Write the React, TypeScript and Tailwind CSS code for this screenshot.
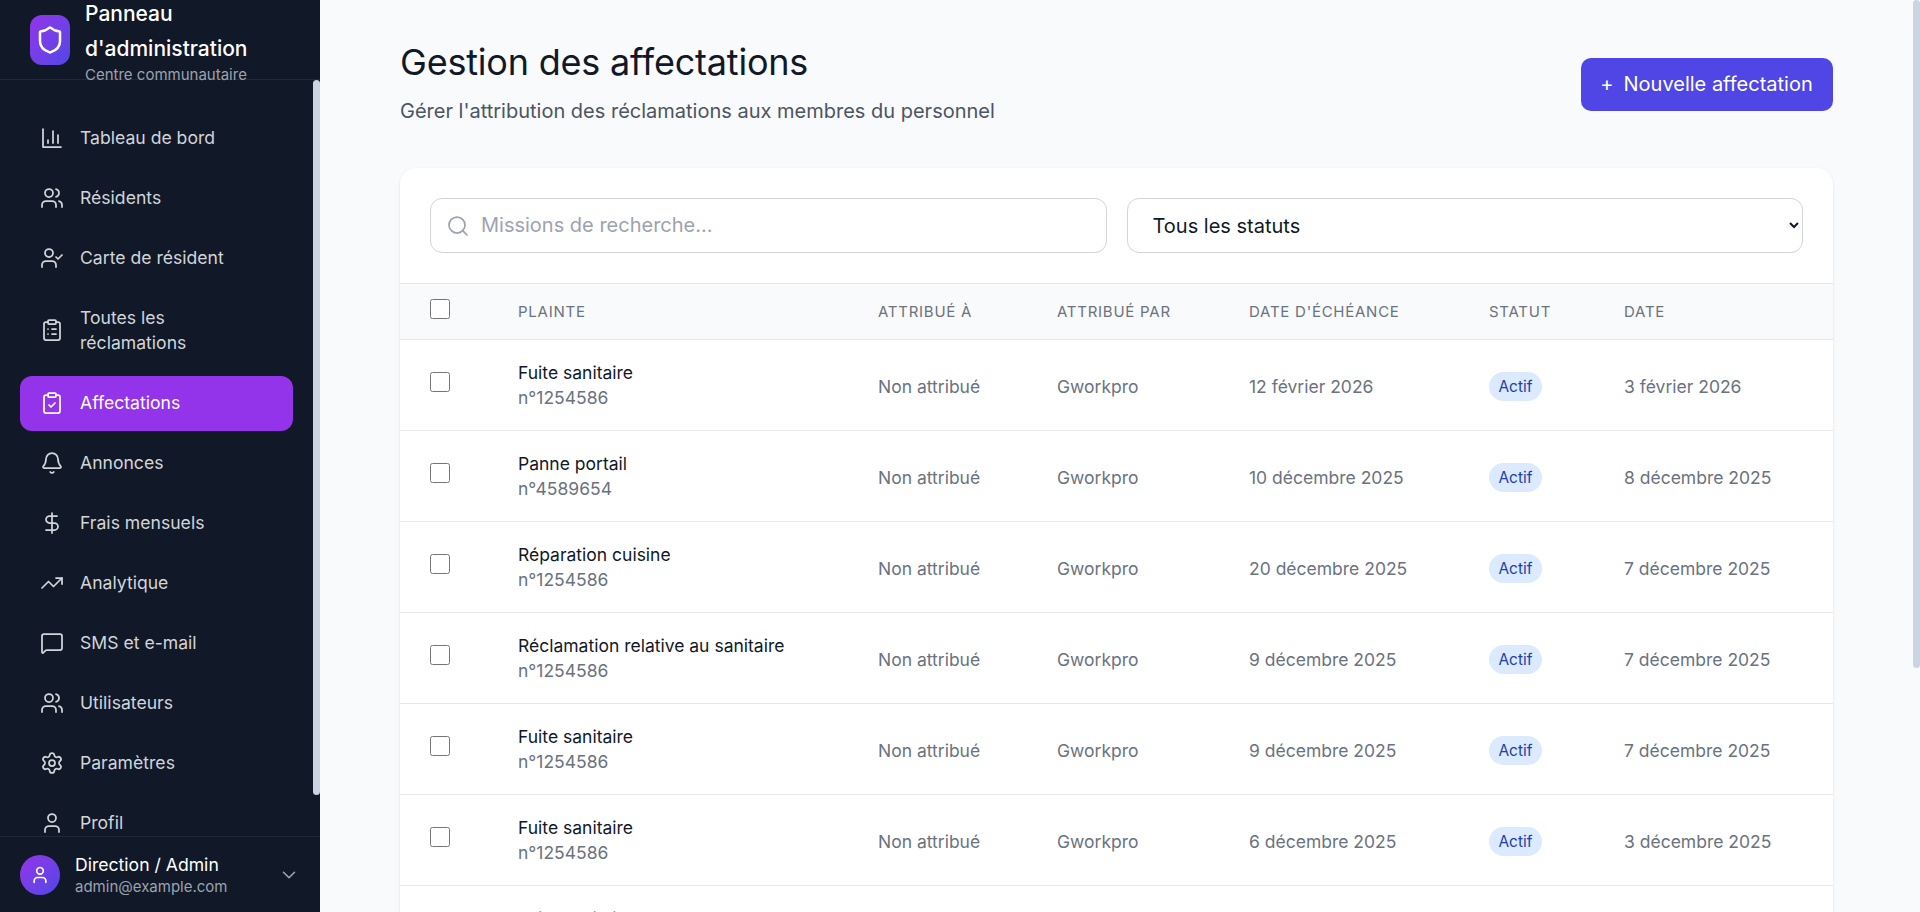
import React from 'react';
import {
  Bell,
  ChevronDown,
  ClipboardCheck,
  ClipboardList,
  DollarSign,
  MessageSquare,
  Search,
  Settings,
  Shield,
  TrendingUp,
  User,
  UserCheck,
  Users,
} from 'lucide-react';

const BarsIcon = ({ size = 24, strokeWidth = 1.75 }: { size?: number; strokeWidth?: number; className?: string }) => (
  <svg width={size} height={size} viewBox="0 0 24 24" fill="none" stroke="currentColor" strokeWidth={strokeWidth} strokeLinecap="round" strokeLinejoin="round" className="shrink-0">
    <path d="M3 3v18h18" />
    <path d="M18 17V9" />
    <path d="M13 17V5" />
    <path d="M8 17v-3" />
  </svg>
);

const navItems = [
  { label: 'Tableau de bord', icon: BarsIcon },
  { label: 'Résidents', icon: Users },
  { label: 'Carte de résident', icon: UserCheck },
  { label: 'Toutes les réclamations', icon: ClipboardList },
  { label: 'Affectations', icon: ClipboardCheck, active: true },
  { label: 'Annonces', icon: Bell },
  { label: 'Frais mensuels', icon: DollarSign },
  { label: 'Analytique', icon: TrendingUp },
  { label: 'SMS et e-mail', icon: MessageSquare },
  { label: 'Utilisateurs', icon: Users },
  { label: 'Paramètres', icon: Settings },
  { label: 'Profil', icon: User },
];

const rows = [
  { title: 'Fuite sanitaire', ref: 'n°1254586', due: '12 février 2026', date: '3 février 2026' },
  { title: 'Panne portail', ref: 'n°4589654', due: '10 décembre 2025', date: '8 décembre 2025' },
  { title: 'Réparation cuisine', ref: 'n°1254586', due: '20 décembre 2025', date: '7 décembre 2025' },
  { title: 'Réclamation relative au sanitaire', ref: 'n°1254586', due: '9 décembre 2025', date: '7 décembre 2025' },
  { title: 'Fuite sanitaire', ref: 'n°1254586', due: '9 décembre 2025', date: '7 décembre 2025' },
  { title: 'Fuite sanitaire', ref: 'n°1254586', due: '6 décembre 2025', date: '3 décembre 2025' },
  { title: 'Fuite sanitaire', ref: 'n°1254586', due: '5 décembre 2025', date: '2 décembre 2025' },
  { title: 'Panne portail', ref: 'n°4589654', due: '4 décembre 2025', date: '1 décembre 2025' },
  { title: 'Réparation cuisine', ref: 'n°1254586', due: '3 décembre 2025', date: '1 décembre 2025' },
];

export default function App() {
  return (
    <div className="relative flex h-screen overflow-hidden bg-[#f9fafb] font-['Inter',sans-serif]">
      {/* Sidebar */}
      <aside className="relative flex w-[320px] shrink-0 flex-col bg-[#111827]">
        <div className="flex h-20 shrink-0 items-center gap-[15px] border-b border-[#1f2937] pl-[30px]">
          <div className="flex h-[50px] w-10 shrink-0 items-center justify-center rounded-xl bg-gradient-to-br from-[#9333ea] to-[#4f46e5] text-white">
            <Shield size={30} />
          </div>
          <div className="relative w-[200px]">
            <div className="text-[21px] font-medium leading-[35px] text-white">Panneau d'administration</div>
            <div className="text-[15px] leading-[17px] text-[#9ca3af]">Centre communautaire</div>
          </div>
        </div>

        <nav className="min-h-0 flex-1 overflow-y-auto pb-[30px] pl-5 pr-[27px] pt-[30px]">
          <ul className="flex flex-col gap-[5px]">
            {navItems.map((item) => {
              const Icon = item.icon;
              return (
                <li key={item.label}>
                  <a
                    className={`flex items-center gap-4 rounded-xl px-5 py-[14.75px] text-[17.6px] leading-[25.5px] ${
                      item.active ? 'bg-[#9333ea] text-white' : 'text-[#d1d5db]'
                    }`}
                  >
                    <Icon size={24} strokeWidth={1.75} className="shrink-0" />
                    <span>{item.label}</span>
                  </a>
                </li>
              );
            })}
          </ul>
        </nav>

        {/* barre de defilement */}
        <div className="absolute right-0 top-20 h-[715px] w-[7px] rounded-[4px] bg-[#cbd5e1]" />

        <div className="flex h-[76px] shrink-0 items-center gap-[15px] border-t border-[#1f2937] px-5">
          <div className="flex h-10 w-10 shrink-0 items-center justify-center rounded-full bg-gradient-to-br from-[#9333ea] to-[#4f46e5] text-white">
            <User size={20} />
          </div>
          <div className="min-w-0 flex-1">
            <div className="text-[17.6px] font-normal leading-[24px] text-white">Direction / Admin</div>
            <div className="text-[15px] leading-[20px] text-[#9ca3af]">admin@example.com</div>
          </div>
          <ChevronDown size={22} strokeWidth={1.75} className="text-[#9ca3af]" />
        </div>
      </aside>

      {/* Contenu */}
      <main className="min-w-0 flex-1 overflow-y-auto pb-[67px] pl-20 pr-[87px] pt-10">
        <div className="flex items-start justify-between">
          <div>
            <h1 className="text-[36px] font-normal leading-[44px] tracking-[-0.2px] text-[#111827]">Gestion des affectations</h1>
            <p className="mt-[13px] text-[20px] leading-[28px] text-[#4b5563]">Gérer l'attribution des réclamations aux membres du personnel</p>
          </div>
          <button className="mt-[18px] flex h-[53px] w-[252px] items-center justify-center gap-[10px] rounded-[10px] bg-[#4f46e5] pb-[2px] pr-[1px] text-[20px] font-normal text-white">
            <span>+</span>
            <span>Nouvelle affectation</span>
          </button>
        </div>

        <div className="mt-[43px] rounded-2xl bg-white shadow-sm">
          <div className="grid grid-cols-2 gap-5 p-[30px]">
            <div className="relative">
              <Search size={24} strokeWidth={1.75} className="absolute left-4 top-[16px] text-[#9ca3af]" />
              <input
                placeholder="Missions de recherche..."
                className="h-[55px] w-full rounded-xl border border-[#d1d5db] bg-white pb-[2px] pl-[50px] pr-4 text-[20px] outline-none placeholder:text-[#9ca3af]"
              />
            </div>
            <select className="h-[55px] w-full rounded-xl border border-[#d1d5db] bg-white pl-[21px] pr-2 text-[20px] font-normal text-[#111827] outline-none">
              <option>Tous les statuts</option>
            </select>
          </div>

          <table className="w-full table-fixed border-collapse">
            <thead>
              <tr className="h-[56px] border-y border-[#e5e7eb] bg-[#f9fafb] text-left text-[15px] tracking-[0.75px] text-[#6b7280]">
                <th className="w-[88px] pl-[30px] font-normal">
                  <input type="checkbox" className="mb-[5px] block h-5 w-5" />
                </th>
                <th className="w-[360px] pl-[30px] pt-[1px] font-normal">PLAINTE</th>
                <th className="w-[179px] pl-[30px] pt-[1px] font-normal">ATTRIBUÉ À</th>
                <th className="w-[192px] pl-[30px] pt-[1px] font-normal">ATTRIBUÉ PAR</th>
                <th className="w-[240px] pl-[30px] pt-[1px] font-normal">DATE D'ÉCHÉANCE</th>
                <th className="w-[135px] pl-[30px] pt-[1px] font-normal">STATUT</th>
                <th className="pl-[30px] pt-[1px] font-normal">DATE</th>
              </tr>
            </thead>
            <tbody>
              {rows.map((row, i) => (
                <tr key={i} className="h-[91px] border-b border-[#e5e7eb] text-[17.5px] text-[#6b7280]">
                  <td className="pl-[30px]">
                    <input type="checkbox" className="mb-[7px] block h-5 w-5" />
                  </td>
                  <td className="pl-[30px]">
                    <div className="leading-[25px] text-[#111827]">{row.title}</div>
                    <div className="leading-[25px]">{row.ref}</div>
                  </td>
                  <td className="pl-[30px] pt-[4px]">Non attribué</td>
                  <td className="pl-[30px] pt-[4px]">Gworkpro</td>
                  <td className="pl-[30px] pt-[4px]">{row.due}</td>
                  <td className="pl-[30px] pt-[2px]">
                    <span className="inline-block rounded-full bg-[#dbeafe] px-[9.5px] py-[3px] text-[15.4px] leading-[23px] text-[#1e40af]">Actif</span>
                  </td>
                  <td className="pl-[30px] pt-[4px]">{row.date}</td>
                </tr>
              ))}
            </tbody>
          </table>
        </div>
      </main>

      {/* barre de defilement de la page */}
      <div className="absolute right-0 top-0 h-[668px] w-[7px] rounded-[4px] bg-[#cbd5e1]" />
    </div>
  );
}
